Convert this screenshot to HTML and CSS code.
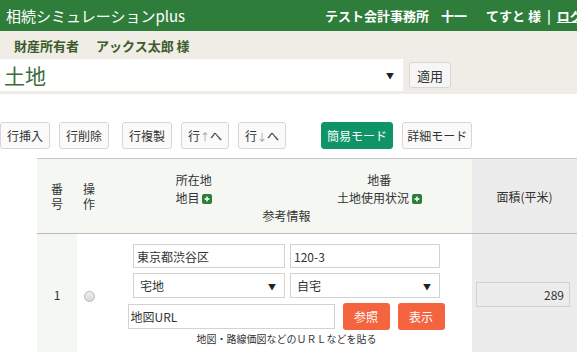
FILE: index.html
```html
<!DOCTYPE html>
<html lang="ja">
<head>
    <meta charset="UTF-8">
    <meta name="viewport" content="width=device-width, initial-scale=1.0">
    <title>相続シミュレーションplus</title>
    <link rel="stylesheet" href="styles.css">
</head>
<body>

    <div class="topbar">
        <div class="app-title">相続シミュレーションplus</div>
        <div class="user-info">
            <span>テスト会計事務所</span>
            <span class="staff">十一</span>
            <span class="user">てすと 様</span>
            <span class="sep">|</span>
            <a href="#">ログアウト</a>
        </div>
    </div>

    <div class="owner-bar">
        <div class="owner">財産所有者<span class="owner-name">アックス太郎 様</span></div>
        <div class="category-row">
            <div class="select-wrap category-select">
                <select>
                    <option>土地</option>
                </select>
            </div>
            <button class="btn btn-apply">適用</button>
        </div>
    </div>

    <div class="toolbar">
        <button class="btn">行挿入</button>
        <button class="btn">行削除</button>
        <button class="btn btn-wide-gap">行複製</button>
        <button class="btn btn-move">行<span class="arrow">↑</span>へ</button>
        <button class="btn btn-move">行<span class="arrow">↓</span>へ</button>
        <button class="btn btn-mode active">簡易モード</button>
        <button class="btn btn-mode-alt">詳細モード</button>
    </div>

    <table class="grid">
        <colgroup>
            <col class="col-no">
            <col class="col-op">
            <col class="col-main">
            <col class="col-area">
        </colgroup>
        <thead>
            <tr>
                <th>番<br>号</th>
                <th>操<br>作</th>
                <th>
                    <div class="head-main">
                        <span>所在地</span>
                        <span>地番</span>
                        <span>地目 <i class="plus"><svg width="10" height="10" viewBox="0 0 10 10"><rect width="10" height="10" rx="2" fill="#2e7d3b"/><path d="M5 2.5v5M2.5 5h5" stroke="#fff" stroke-width="1.4"/></svg></i></span>
                        <span>土地使用状況 <i class="plus"><svg width="10" height="10" viewBox="0 0 10 10"><rect width="10" height="10" rx="2" fill="#2e7d3b"/><path d="M5 2.5v5M2.5 5h5" stroke="#fff" stroke-width="1.4"/></svg></i></span>
                        <span class="span-2">参考情報</span>
                    </div>
                </th>
                <th class="area">面積(平米)</th>
            </tr>
        </thead>
        <tbody>
            <tr>
                <td class="no">1</td>
                <td class="op"><input type="radio" name="row" class="radio"></td>
                <td class="main">
                    <div class="entry">
                        <input type="text" class="field" value="東京都渋谷区">
                        <input type="text" class="field" value="120-3">
                        <div class="select-wrap"><select class="field"><option>宅地</option></select></div>
                        <div class="select-wrap"><select class="field"><option>自宅</option></select></div>
                    </div>
                    <div class="url-row">
                        <input type="text" class="field url" value="地図URL">
                        <button class="btn-orange">参照</button>
                        <button class="btn-orange">表示</button>
                    </div>
                    <div class="note">地図・路線価図などのＵＲＬなどを貼る</div>
                </td>
                <td class="area">
                    <input type="text" class="field area-input" value="289" readonly>
                </td>
            </tr>
        </tbody>
    </table>

</body>
</html>
```

FILE: styles.css
```css
html, body {
    overflow: hidden;
}

body {
    margin: 0;
    font-family: "Noto Sans CJK JP", "Noto Sans", sans-serif;
    font-size: 12px;
    color: #333;
    background-color: #fff;
}

/* header */
.topbar {
    display: flex;
    align-items: center;
    height: 31px;
    padding-left: 6px;
    background-color: #2e7d3b;
    color: #fff;
    white-space: nowrap;
}

.app-title {
    flex: 0 0 319px;
    font-size: 15px;
    line-height: 20px;
}

.user-info {
    display: flex;
    font-size: 13px;
    font-weight: bold;
    line-height: 18px;
}

.user-info .staff {
    margin-left: 12px;
}

.user-info .user {
    margin-left: 19px;
}

.user-info .sep {
    margin: 0 6px 0 6px;
}

.user-info a {
    color: #fff;
}

.owner-bar {
    background-color: #efede5;
    padding-bottom: 3px;
}

.owner {
    height: 28px;
    line-height: 30px;
    padding-left: 14px;
    font-size: 13px;
    font-weight: bold;
    color: #3d5c2b;
}

.owner-name {
    margin-left: 17px;
}

.category-row {
    display: flex;
    align-items: center;
    gap: 6px;
}

/* selects */
.select-wrap {
    position: relative;
}

.select-wrap::after {
    content: "▼";
    position: absolute;
    right: 9px;
    top: 50%;
    transform: translateY(-50%);
    font-size: 8px;
    color: #222;
    pointer-events: none;
}

.select-wrap select {
    appearance: none;
    -webkit-appearance: none;
    width: 100%;
    height: 100%;
    margin: 0;
    font-family: inherit;
}

.category-select {
    width: 403px;
    height: 32px;
}

.category-select select {
    border: none;
    background-color: #fff;
    padding: 0 4px;
    font-size: 21px;
    line-height: 32px;
    color: #3e6b3e;
}

/* buttons */
.btn {
    height: 27px;
    padding: 0 6px;
    font-family: inherit;
    font-size: 12px;
    line-height: 25px;
    color: #333;
    background-color: #fafafa;
    border: 1px solid #d6d6d6;
    border-radius: 3px;
}

.btn-apply {
    height: 26px;
    width: 42px;
    padding: 0;
    font-size: 13px;
    background-color: #f6f6f6;
}

.toolbar {
    display: flex;
    gap: 9px;
    margin-top: 28px;
}

.btn-wide-gap {
    margin-left: 4px;
}

.btn-move {
    padding: 0 6px;
}

.btn .arrow {
    font-size: 10px;
    color: #999;
}

.btn-mode {
    margin-left: 26px;
}

.btn.active {
    background-color: #0f9467;
    border-color: #0f9467;
    color: #fff;
    padding: 0 5px;
}

.btn-mode-alt {
    padding: 0 4px;
}

/* table */
.grid {
    margin: 9px 0 0 37px;
    width: 540px;
    table-layout: fixed;
    border-collapse: collapse;
}

.col-no { width: 40px; }
.col-op { width: 24px; }
.col-main { width: 371px; }
.col-area { width: 105px; }

.grid th {
    height: 74px;
    padding: 0;
    font-weight: normal;
    font-size: 12px;
    line-height: 15px;
    background-color: #f4f7f2;
    border-top: 1px solid #c8c8c8;
    border-bottom: 1px solid #bcbcbc;
}

.grid th.area,
.grid td.area {
    background-color: #ececec;
}

.head-main {
    display: grid;
    grid-template-columns: 1fr 1fr;
    grid-auto-rows: 18px;
    align-items: center;
    text-align: center;
    margin-top: 3px;
}

.head-main .span-2 {
    grid-column: span 2;
}

.plus {
    display: inline-block;
    vertical-align: -1px;
}

.plus svg {
    display: block;
}

.grid td {
    padding: 0;
    vertical-align: middle;
}

.grid td.no {
    text-align: center;
    background-color: #f4f7f2;
}

.grid td.op {
    text-align: center;
}

.radio {
    appearance: none;
    -webkit-appearance: none;
    width: 11px;
    height: 11px;
    margin: 0 0 0 1px;
    border: 1px solid #b8b8b8;
    border-radius: 50%;
    background: linear-gradient(#f0f0f0, #d8d8d8);
    vertical-align: middle;
}

.grid td.main {
    padding: 10px 0 8px;
}

.entry {
    display: grid;
    grid-template-columns: 152px 150px;
    grid-template-rows: 24px 25px;
    gap: 5px;
    width: 307px;
    margin: 0 auto;
}

.field {
    box-sizing: border-box;
    width: 100%;
    height: 100%;
    margin: 0;
    padding: 0 3px;
    font-family: inherit;
    font-size: 12px;
    color: #333;
    background-color: #fff;
    border: 1px solid #d2d2d2;
}

select.field {
    padding-left: 6px;
}

.url-row {
    display: flex;
    align-items: center;
    gap: 8px;
    width: 318px;
    height: 28px;
    margin: 4px auto 0;
}

.field.url {
    width: 207px;
    height: 25px;
    padding-left: 2px;
}

.btn-orange {
    width: 47px;
    height: 27px;
    padding: 0;
    font-family: inherit;
    font-size: 12px;
    color: #fff;
    background-color: #f3643f;
    border: none;
    border-radius: 3px;
}

.note {
    margin-top: 2px;
    font-size: 10px;
    line-height: 14px;
    text-align: center;
}

.grid td.area {
    padding: 0 7px 0 4px;
}

.area-input {
    height: 25px;
    text-align: right;
    padding-right: 5px;
    background-color: #ececec;
}
```
